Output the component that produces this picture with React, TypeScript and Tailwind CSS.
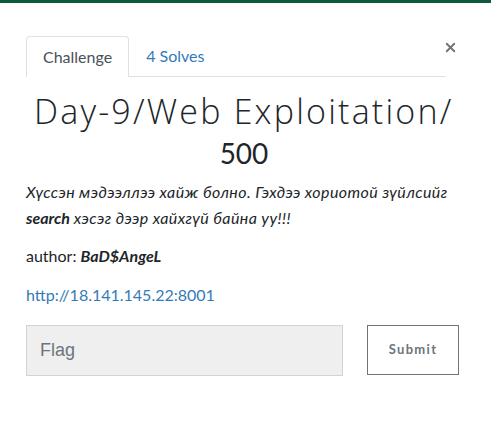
import { X } from "lucide-react"

export default function App() {
    return (
        <div className="w-[491px] h-[425px] bg-white overflow-hidden relative font-['Lato',sans-serif] text-[#212529]">
            {/* navbar peeking behind modal */}
            <div className="h-[3px] bg-[#0d5a3b]" />

            <div className="pl-[26px] pr-[45px] pt-[32px]">
                <div className="flex items-end border-b border-[#dee2e6] relative">
                    <div className="h-[41px] px-[16px] flex items-center border border-b-0 border-[#dee2e6] rounded-t-[4px] bg-white text-[16px] text-[#495057] -mb-px pb-px">
                        Challenge
                    </div>
                    <div className="h-[41px] px-[17px] flex items-center text-[16px] text-[#337ab7]">
                        4 Solves
                    </div>
                    <button className="absolute right-[-12px] top-[5px] text-[#6c757d]">
                        <X size={15} strokeWidth={3} />
                    </button>
                </div>

                <h2 className="mt-[12px] text-center text-[34px] leading-[44px] font-light tracking-[2.2px] font-['Open_Sans',sans-serif] text-[#212529] pl-[8px] whitespace-nowrap">
                    Day-9/Web Exploitation/
                </h2>
                <h3 className="mt-[4px] text-center text-[28px] leading-[32px] text-[#212529] pl-[16px]">500</h3>

                <p className="mt-[10px] text-[16px] leading-[26px] italic whitespace-nowrap">
                    <span className="tracking-[0.4px]">Хүссэн мэдээллээ хайж болно. Гэхдээ хориотой зүйлсийг</span>
                    <br />
                    <b>search</b> <span className="tracking-[0.4px]">хэсэг дээр хайхгүй байна уу!!!</span>
                </p>
                <p className="mt-[13px] text-[16px] leading-[24px]">
                    author: <b><i>BaD$AngeL</i></b>
                </p>
                <p className="mt-[15px] text-[16px] leading-[24px]">
                    <a className="text-[#337ab7]">http://18.141.145.22:8001</a>
                </p>

                <div className="mt-[18px] flex gap-[24px] w-[433px]">
                    <input
                        placeholder="Flag"
                        className="w-[317px] h-[51px] bg-[#efefef] border border-[#ced4da] px-[13px] text-[18px] font-['Liberation_Sans',sans-serif] placeholder:text-[#6c757d] outline-none"
                    />
                    <button className="w-[92px] h-[50px] border border-[#6c757d] text-[13px] font-bold tracking-[1.3px] text-[#6c757d]">
                        Submit
                    </button>
                </div>
            </div>
        </div>
    )
}
